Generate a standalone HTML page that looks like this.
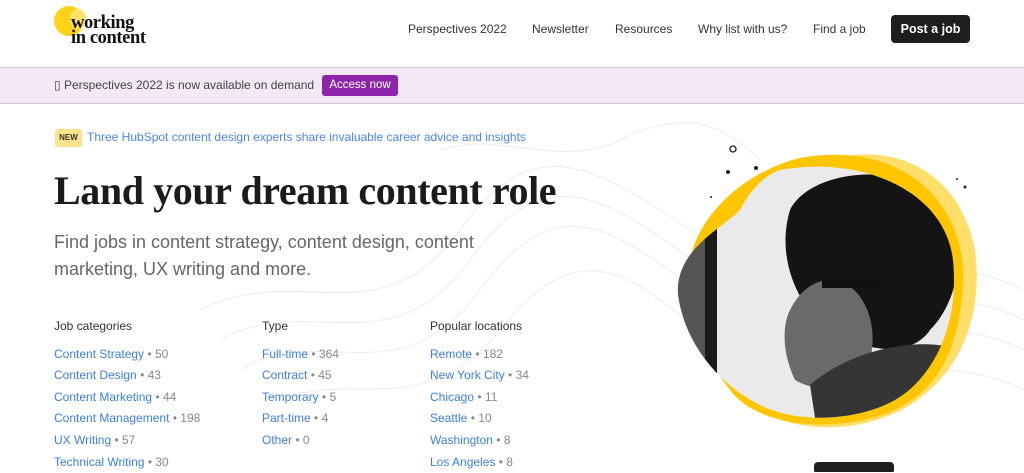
<!DOCTYPE html>
<html><head><meta charset="utf-8"><style>
*{margin:0;padding:0;box-sizing:border-box}
body{width:1024px;height:472px;overflow:hidden;background:#fff;font-family:"Liberation Sans",sans-serif;position:relative;color:#333}
.a{position:absolute}
.nav a{position:absolute;top:22px;font-size:12px;color:#333;white-space:nowrap}
.banner{top:67px;left:0;width:1024px;height:37px;background:#f3e8f6;border-top:1px solid #dcc3e4;border-bottom:1px solid #dcc3e4}
.col{position:absolute;top:316px;font-size:12px;color:#333}
.col div{line-height:21.6px;white-space:nowrap}
.col .h{margin-bottom:6px}
.col span{color:#3d7fe0}
.col i{font-style:normal;color:#888}
</style></head><body>
<svg class="a" style="left:200px;top:110px" width="824" height="362"><g fill="none" stroke="#ececec" stroke-width="1">
<path d="M0 200 C100 150 180 230 260 120 S400 60 520 140 S700 120 824 180"/>
<path d="M20 230 C110 180 190 260 270 150 S410 90 520 170 S700 150 824 210"/>
<path d="M40 260 C120 210 200 290 280 180 S420 120 520 200 S700 180 824 240"/>
<path d="M60 300 C140 250 220 320 300 220 S430 160 520 240 S700 220 824 280"/>
<path d="M240 40 C300 20 360 60 420 30 S520 10 560 50"/>
</g></svg>
<div class="a" style="left:54px;top:6px;width:30px;height:30px;border-radius:50%;background:#ffd31a"></div>
<div class="a" style="left:70px;top:9px;width:16px;height:20px;border-radius:50%;background:#ffe36a"></div>
<div class="a" style="left:71px;top:16px;font-family:'Liberation Serif',serif;font-weight:bold;font-size:18.5px;line-height:15px;color:#111;letter-spacing:-0.4px">working<br>in content</div>
<div class="nav">
<a style="left:408px">Perspectives 2022</a>
<a style="left:532px">Newsletter</a>
<a style="left:615px">Resources</a>
<a style="left:698px">Why list with us?</a>
<a style="left:813px">Find a job</a>
</div>
<div class="a" style="left:891px;top:15px;width:79px;height:28px;background:#1e1e1e;border-radius:4px;color:#fff;font-size:12.5px;font-weight:bold;text-align:center;line-height:28px">Post a job</div>
<div class="a banner"></div>
<div class="a" style="left:54px;top:78px;font-size:12px;color:#444;white-space:nowrap">▯ Perspectives 2022 is now available on demand</div>
<div class="a" style="left:322px;top:75px;width:76px;height:21px;background:#8e24aa;border-radius:3px;color:#fff;font-size:11.5px;text-align:center;line-height:21px">Access now</div>
<div class="a" style="left:55px;top:129px;width:27px;height:18px;background:#ffe38a;border-radius:3px;font-size:8px;font-weight:bold;text-align:center;line-height:18px;color:#333">NEW</div>
<div class="a" style="left:87px;top:130px;font-size:12px;color:#4a86e8;white-space:nowrap">Three HubSpot content design experts share invaluable career advice and insights</div>
<div class="a" style="left:54px;top:167px;font-family:'Liberation Serif',serif;font-weight:bold;font-size:40px;color:#1b1b1b;white-space:nowrap;letter-spacing:-0.4px">Land your dream content role</div>
<div class="a" style="left:54px;top:229px;font-size:18px;line-height:27px;color:#666;width:440px">Find jobs in content strategy, content design, content marketing, UX writing and more.</div>
<div class="col" style="left:54px"><div class="h">Job categories</div>
<div><span>Content Strategy</span> <i>• 50</i></div><div><span>Content Design</span> <i>• 43</i></div><div><span>Content Marketing</span> <i>• 44</i></div><div><span>Content Management</span> <i>• 198</i></div><div><span>UX Writing</span> <i>• 57</i></div><div><span>Technical Writing</span> <i>• 30</i></div></div>
<div class="col" style="left:262px"><div class="h">Type</div>
<div><span>Full-time</span> <i>• 364</i></div><div><span>Contract</span> <i>• 45</i></div><div><span>Temporary</span> <i>• 5</i></div><div><span>Part-time</span> <i>• 4</i></div><div><span>Other</span> <i>• 0</i></div></div>
<div class="col" style="left:430px"><div class="h">Popular locations</div>
<div><span>Remote</span> <i>• 182</i></div><div><span>New York City</span> <i>• 34</i></div><div><span>Chicago</span> <i>• 11</i></div><div><span>Seattle</span> <i>• 10</i></div><div><span>Washington</span> <i>• 8</i></div><div><span>Los Angeles</span> <i>• 8</i></div></div>
<svg class="a" style="left:660px;top:130px" width="340" height="342">
<path d="M150 35 C230 5 300 40 315 120 C325 200 290 250 250 275 C210 300 150 305 110 285 C60 260 20 200 25 150 C30 90 90 55 150 35Z" fill="#ffd02a" opacity="0.7"/>
<path d="M140 28 C240 10 305 70 303 150 C300 230 270 265 230 282 C180 302 100 300 70 260 C40 220 15 180 30 130 C40 80 90 40 140 28Z" fill="#ffc600"/>
<defs><clipPath id="c"><path d="M120 40 C200 25 285 60 293 130 C300 200 270 250 235 270 C200 290 140 295 100 275 C60 255 25 215 18 165 C15 120 60 100 80 80 C90 60 105 45 120 40Z"/></clipPath></defs>
<g clip-path="url(#c)">
<rect width="340" height="342" fill="#eaeaea"/>
<rect x="0" y="80" width="45" height="260" fill="#555"/>
<rect x="45" y="80" width="12" height="260" fill="#1a1a1a"/>
<path d="M130 80 C150 40 240 30 280 70 C310 110 300 170 270 200 C250 230 200 220 170 200 C140 180 115 130 130 80Z" fill="#141414"/>
<path d="M170 150 C200 150 220 190 210 230 C200 260 160 265 135 250 C125 230 120 200 130 180 C140 160 155 150 170 150Z" fill="#6a6a6a"/>
<path d="M150 255 C190 220 260 205 300 220 L300 320 L160 320Z" fill="#353535"/>
<rect x="162" y="150" width="60" height="8" fill="#111"/>
</g>
<circle cx="73" cy="19" r="3" fill="none" stroke="#222" stroke-width="1.3"/>
<circle cx="96" cy="38" r="2" fill="#222"/><circle cx="68" cy="42" r="2" fill="#222"/>
<circle cx="51" cy="67" r="1" fill="#222"/><circle cx="297" cy="49" r="1" fill="#222"/><circle cx="305" cy="57" r="1.5" fill="#222"/>
<rect x="154" y="332" width="80" height="12" rx="4" fill="#1e1e1e"/>
</svg>
</body></html>
